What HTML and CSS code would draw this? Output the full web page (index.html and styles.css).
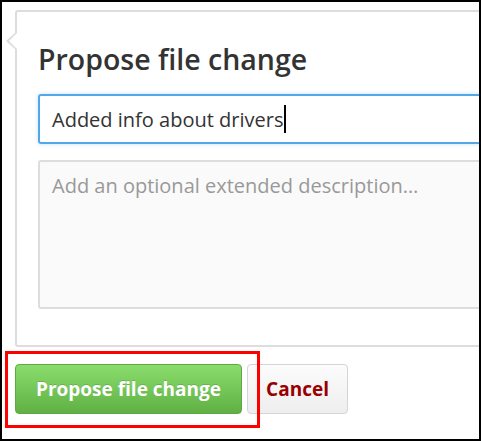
FILE: index.html
```html
<!DOCTYPE html>
<html>
<head>
<meta charset="utf-8">
<link rel="stylesheet" href="styles.css">
</head>
<body>
<div class="frame">
  <div class="panel">
    <h2 class="title">Propose file change</h2>
    <div class="input"><span class="value">Added info about drivers</span><span class="caret"></span></div>
    <div class="textarea"><span class="placeholder">Add an optional extended description…</span></div>
  </div>
  <div class="actions">
    <button class="btn btn-primary">Propose file change</button>
    <button class="btn btn-cancel">Cancel</button>
  </div>
  <div class="highlight"></div>
</div>
</body>
</html>
```
FILE: styles.css
```css
html, body {
  margin: 0;
  padding: 0;
  background: #fff;
}
.frame {
  width: 481px;
  height: 441px;
  box-sizing: border-box;
  border: 2px solid #000;
  overflow: hidden;
  position: relative;
  font-family: "Open Sans", "Noto Sans", sans-serif;
}
.panel {
  position: relative;
  margin: 8px 0 0 13px;
  width: 520px;
  box-sizing: border-box;
  border: 2px solid #ddd;
  border-radius: 3px;
  padding: 29px 0 36px 21px;
  background: #fff;
}
.panel::before {
  content: "";
  position: absolute;
  left: -11px;
  top: 19px;
  width: 0;
  height: 0;
  border-style: solid;
  border-width: 10px 11px 10px 0;
  border-color: transparent #ddd transparent transparent;
}
.panel::after {
  content: "";
  position: absolute;
  left: -8px;
  top: 20px;
  width: 0;
  height: 0;
  border-style: solid;
  border-width: 9px 9px 9px 0;
  border-color: transparent #fff transparent transparent;
}
.title {
  margin: 0 0 17px 0;
  font-size: 28.5px;
  line-height: 36px;
  font-weight: 600;
  color: #333;
}
.input {
  height: 50px;
  box-sizing: border-box;
  border: 2px solid #51a7e8;
  border-radius: 3px;
  box-shadow: 0 0 4px rgba(81, 167, 232, 0.35);
  padding: 0 12px;
  display: flex;
  align-items: center;
  font-size: 20px;
  color: #333;
}
.caret {
  display: inline-block;
  width: 2px;
  height: 28px;
  background: #000;
  margin-left: 1px;
}
.textarea {
  margin-top: 16px;
  height: 149px;
  box-sizing: border-box;
  border: 2px solid #ddd;
  border-radius: 3px;
  background: #fafafa;
  padding: 10px 12px;
  font-size: 20px;
  line-height: 28px;
}
.placeholder {
  color: #999;
}
.actions {
  display: flex;
  gap: 5px;
  margin: 17px 0 0 13px;
}
.btn {
  height: 50px;
  box-sizing: border-box;
  border-radius: 4px;
  font-family: "Open Sans", "Noto Sans", sans-serif;
  font-weight: 700;
  font-size: 19px;
  padding: 0;
  cursor: pointer;
}
.btn-primary {
  width: 227px;
  color: #fff;
  border: 1px solid #5ca941;
  background: linear-gradient(#8add6d, #60b044);
  text-shadow: 0 -1px 0 rgba(0, 0, 0, 0.15);
}
.btn-cancel {
  width: 101px;
  color: #990000;
  border: 1px solid #d5d5d5;
  background: linear-gradient(#fcfcfc, #eeeeee);
}
.highlight {
  position: absolute;
  left: 3px;
  top: 349px;
  width: 255px;
  height: 77px;
  box-sizing: border-box;
  border: 3px solid #ff0000;
  pointer-events: none;
}
```
